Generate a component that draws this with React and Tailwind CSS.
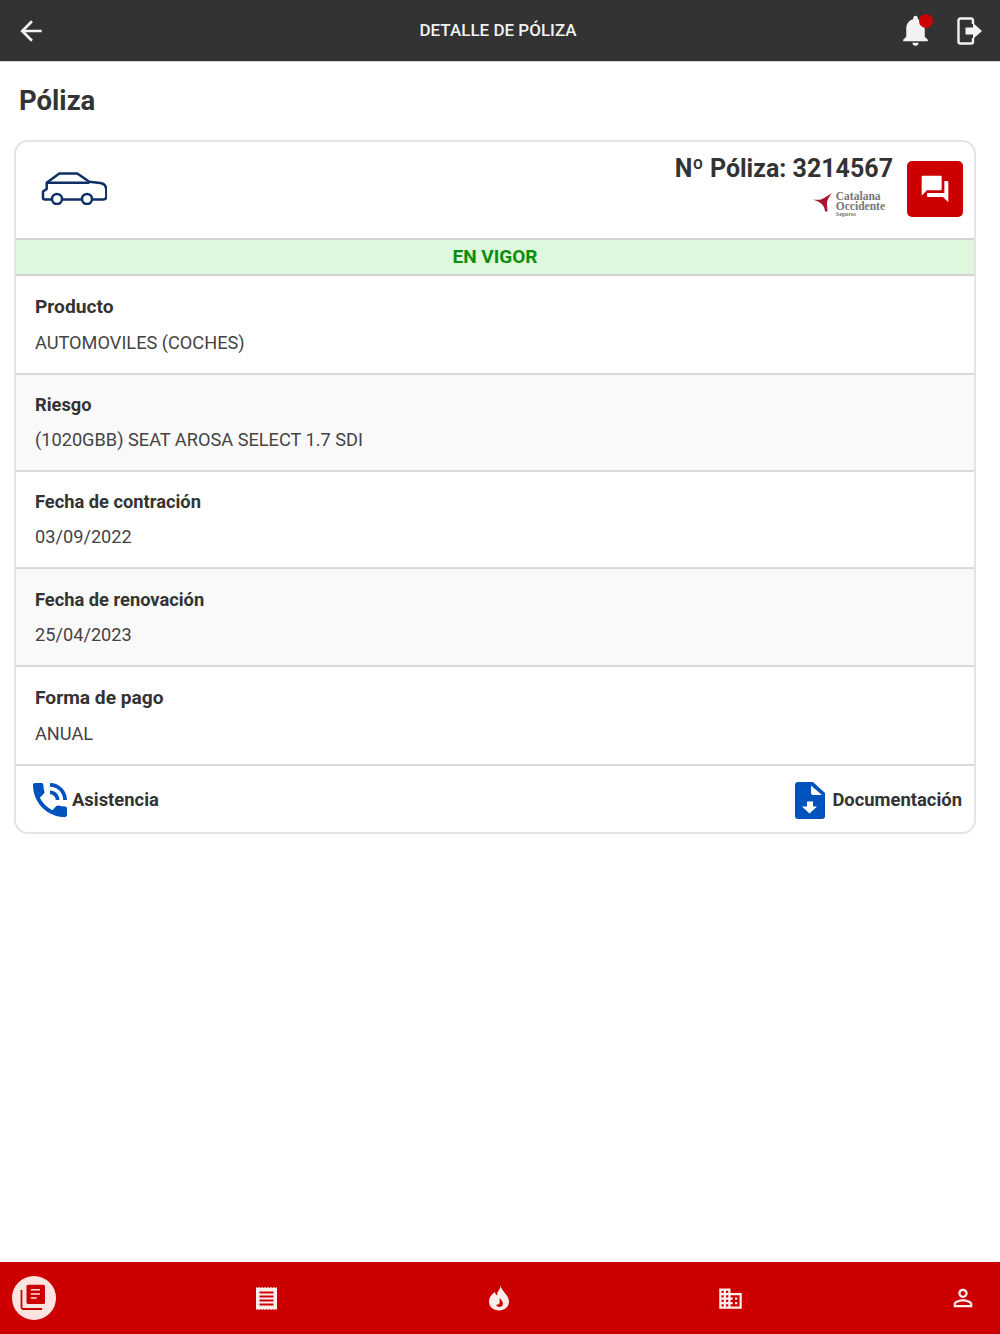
import React from 'react';

const rows = [
  { label: 'Producto', value: 'AUTOMOVILES (COCHES)', box: 'h-[99px] bg-white pt-[18px]', title: 'text-[19.200px]', gap: 'mt-[10px]' },
  { label: 'Riesgo', value: '(1020GBB) SEAT AROSA SELECT 1.7 SDI', box: 'h-[97px] bg-[#f9f9f9] pt-[17px]', title: 'text-[18.300px]', gap: 'mt-[9px]' },
  { label: 'Fecha de contración', value: '03/09/2022', box: 'h-[97px] bg-white pt-[17px]', title: 'text-[18.300px]', gap: 'mt-[9px]' },
  { label: 'Fecha de renovación', value: '25/04/2023', box: 'h-[98px] bg-[#f9f9f9] pt-[18px]', title: 'text-[18.300px]', gap: 'mt-[9px]' },
  { label: 'Forma de pago', value: 'ANUAL', box: 'h-[99px] bg-white pt-[18px]', title: 'text-[19.200px]', gap: 'mt-[10px]' },
];

function Icon({ d, className, viewBox = '0 0 24 24' }) {
  return (
    <svg viewBox={viewBox} fill="currentColor" className={className}>
      <path d={d} />
    </svg>
  );
}

function CarIcon() {
  return (
    <svg viewBox="0 0 66 33" fill="none" stroke="#0f2f66" strokeWidth="2.500" strokeLinejoin="round" className="w-[66px] h-[33px] -mt-[3px]">
      <path d="M11 27.500H4q-2 0-2-2v-6l3.700-2.500V10.700L18.300 1.500h18l12 8.200 11 1.300q6 1 6 7v6.700q0 2.800-3 2.800H51M41 27.500H21" />
      <path d="M5.700 10.700H48.300" />
      <circle cx="16" cy="27" r="5" />
      <circle cx="46" cy="27" r="5" />
    </svg>
  );
}

function CatalanaLogo() {
  return (
    <div className="flex items-center gap-[3px] text-[#777777]">
      <svg viewBox="0 0 20 20" className="w-[20px] h-[20px] -mt-[3px]">
        <path d="M0 6.500 C5 7 8 7 11 5 L19 0 C15 5 14 8 14 11 L14.500 18.500 L12 18.500 C11.500 13 9 9.500 0 6.500z" fill="#a8162f" />
      </svg>
      <div className="flex flex-col font-['Liberation_Serif',serif]">
        <span className="text-[11.500px] leading-[10px] font-bold">Catalana</span>
        <span className="text-[11.500px] leading-[10px] font-bold">Occidente</span>
        <span className="text-[6px] leading-[7px] font-bold">Seguros</span>
      </div>
    </div>
  );
}

export default function App() {
  return (
    <div className="min-h-screen flex flex-col bg-white font-['Roboto',sans-serif] text-[#333333]">
      {/* Header */}
      <header className="h-[62px] bg-[#333333] flex items-center pl-[15px] pr-[18px] border-b border-[#d8d8d8] text-[#f2f2f2]">
        <Icon d="M20 11H7.830l5.590-5.590L12 4l-8 8 8 8 1.410-1.410L7.830 13H20v-2z" className="w-[32px] h-[32px]" />
        <h1 className="flex-1 text-center text-[17px] font-medium pl-[52px]">DETALLE DE PÓLIZA</h1>
        <div className="flex items-center gap-[23px]">
          <div className="relative">
            <Icon
              d="M12 22c1.100 0 2-.900 2-2h-4c0 1.100.890 2 2 2zm6-6v-5c0-3.070-1.640-5.640-4.500-6.320V4c0-.830-.670-1.500-1.500-1.500s-1.500.670-1.500 1.500v.680C7.630 5.360 6 7.920 6 11v5l-2 2v1h16v-1l-2-2z"
              className="w-[37px] h-[37px]"
            />
            <span className="absolute top-[2px] right-[1px] w-[14px] h-[14px] rounded-full bg-[#cc0000]" />
          </div>
          <svg viewBox="0 0 25 28" fill="none" className="w-[25px] h-[28px]">
            <path d="M16 7V3.500q0-2-2-2H3.500q-2 0-2 2v21q0 2 2 2H14q2 0 2-2V21" stroke="currentColor" strokeWidth="2.400" />
            <path d="M8.500 10.500H16V6l9 8-9 8v-4.500H8.500z" fill="currentColor" />
          </svg>
        </div>
      </header>

      <main className="flex-1 pl-[14px] pr-[24px]">
        <h2 className="pl-[5px] pt-[21px] pb-[21px] text-[27.500px] leading-[36px] font-bold">Póliza</h2>

        <section className="rounded-[14px] border-2 border-[#e4e4e4] overflow-hidden">
          {/* Summary */}
          <div className="h-[96px] flex items-center pl-[25px] pr-[11px]">
            <CarIcon />
            <div className="ml-auto mr-[14px] flex flex-col items-end -mt-[9px]">
              <p className="text-[25px] leading-[30px] font-bold">Nº Póliza: 3214567</p>
              <div className="mt-[7px] mr-[8px]">
                <CatalanaLogo />
              </div>
            </div>
            <button className="w-[56px] h-[56px] -mt-[3px] rounded-[5px] bg-[#cc0000] flex items-center justify-center text-white">
              <Icon
                d="M21 6h-2v9H6v2c0 .550.450 1 1 1h11l4 4V7c0-.550-.450-1-1-1zm-4 6V3c0-.550-.450-1-1-1H3c-.550 0-1 .450-1 1v14l4-4h10c.550 0 1-.450 1-1z"
                className="w-[32px] h-[32px]"
              />
            </button>
          </div>

          {/* Status */}
          <div className="h-[38px] flex items-center justify-center bg-[#dff7dd] border-y-2 border-[#d0d5ce] text-[#0a8f0a] text-[19px] font-bold">
            EN VIGOR
          </div>

          {/* Rows */}
          {rows.map((row) => (
            <div key={row.label} className={`${row.box} border-b-2 border-[#d9d9d9] pl-[19px]`}>
              <p className={`${row.title} leading-[26px] font-bold`}>{row.label}</p>
              <p className={`${row.gap} text-[18.200px] leading-[26px] text-[#444444]`}>{row.value}</p>
            </div>
          ))}

          {/* Footer */}
          <div className="h-[66px] flex items-center justify-between pl-[17px] pr-[12px] pt-[2px]">
            <div className="flex items-center gap-[5px]">
              <Icon
                viewBox="3 3 18 18"
                d="M20 15.500c-1.250 0-2.450-.200-3.570-.570-.350-.110-.740-.030-1.020.240l-2.200 2.200c-2.830-1.440-5.150-3.750-6.590-6.590l2.200-2.210c.280-.260.360-.650.250-1C8.700 6.450 8.500 5.250 8.500 4c0-.550-.450-1-1-1H4c-.550 0-1 .450-1 1 0 9.390 7.610 17 17 17 .550 0 1-.450 1-1v-3.500c0-.550-.450-1-1-1zM19 12h2c0-4.970-4.030-9-9-9v2c3.870 0 7 3.130 7 7zm-4 0h2c0-2.760-2.240-5-5-5v2c1.660 0 3 1.340 3 3z"
                className="w-[34px] h-[34px] text-[#0053bd]"
              />
              <span className="text-[18.400px] font-bold">Asistencia</span>
            </div>
            <div className="flex items-center gap-[7px]">
              <svg viewBox="0 0 30 37" className="w-[30px] h-[37px]">
                <path d="M3 0h15l12 11v23q0 3-3 3H3q-3 0-3-3V3q0-3 3-3z" fill="#0053bd" />
                <path d="M16 3.500l11 9.500h-9q-2 0-2-2z" fill="#fff" />
                <path d="M12 19.500h6v5h4l-7.500 7-7.500-7h5z" fill="#fff" />
              </svg>
              <span className="text-[18.400px] font-bold">Documentación</span>
            </div>
          </div>
        </section>
      </main>

      {/* Bottom nav */}
      <nav className="h-[72px] bg-[#cc0000] flex items-center justify-between pl-[12px] pr-[15px] text-[#fdeeee]">
        <div className="w-[44px] h-[44px] rounded-full bg-[#fde4e1] flex items-center justify-center">
          <svg viewBox="0 0 30 30" fill="none" className="w-[30px] h-[30px]">
            <path d="M2.500 7v17q0 2 2 2H23" stroke="#cc0000" strokeWidth="1.800" />
            <rect x="7.500" y="1.700" width="18.500" height="19.300" rx="1.500" fill="#cc0000" />
            <path d="M11.700 6.700H21M11.700 11H21M11.700 15H17.700" stroke="#fde4e1" strokeWidth="1.500" />
          </svg>
        </div>
        <div className="w-[44px] flex justify-center">
          <svg viewBox="0 0 21 23" className="w-[21px] h-[23px]">
            <path d="M0 0l1.500 1L3 0l1.500 1L6 0l1.500 1L9 0l1.500 1L12 0l1.500 1L15 0l1.500 1L18 0l1.500 1L21 0v23l-1.500-1-1.500 1-1.500-1-1.500 1-1.500-1-1.500 1-1.500-1-1.500 1-1.500-1-1.500 1-1.500-1-1.500 1-1.500-1L0 23z" fill="currentColor" />
            <path d="M3.500 5.500h14M3.500 9.500h14M3.500 13.500h14M3.500 17.500h14" stroke="#cc0000" strokeWidth="2" />
          </svg>
        </div>
        <div className="w-[44px] flex justify-center">
          <svg viewBox="0 0 20 26" className="w-[20px] h-[26px]">
            <path d="M11 0c1 3-1.500 5.500-2.500 7.500-.5 1-.5 2 0 3-1.500-.5-2.500-2-2.500-3.500C3 9 0 12.500 0 16.500 0 22 4.500 25.500 10 25.500S20 22 20 16.500C20 10 13 7 11 0z" fill="currentColor" />
            <path d="M11 13c.5 2 3 3 3 5.500 0 2-1.500 3.500-3.500 3.500-1.800 0-3-1-3.500-2.500 1.500.5 3 0 3.500-1.500.5-1.500-.5-3.500.5-5z" fill="#cc0000" />
          </svg>
        </div>
        <div className="w-[44px] flex justify-center">
          <Icon
            d="M12 7V3H2v18h20V7H12zM6 19H4v-2h2v2zm0-4H4v-2h2v2zm0-4H4V9h2v2zm0-4H4V5h2v2zm4 12H8v-2h2v2zm0-4H8v-2h2v2zm0-4H8V9h2v2zm0-4H8V5h2v2zm10 12h-8v-2h2v-2h-2v-2h2v-2h-2V9h8v10zm-2-8h-2v2h2v-2zm0 4h-2v2h2v-2z"
            className="w-[27px] h-[27px]"
          />
        </div>
        <div className="w-[44px] flex justify-center">
          <Icon
            d="M12 5.900c1.160 0 2.100.940 2.100 2.100s-.940 2.100-2.100 2.100S9.900 9.160 9.900 8s.940-2.100 2.100-2.100m0 9c2.970 0 6.100 1.460 6.100 2.100v1.100H5.900V17c0-.640 3.130-2.100 6.100-2.100M12 4C9.790 4 8 5.790 8 8s1.790 4 4 4 4-1.790 4-4-1.790-4-4-4zm0 9c-2.670 0-8 1.340-8 4v3h16v-3c0-2.660-5.330-4-8-4z"
            className="w-[28px] h-[28px]"
          />
        </div>
      </nav>
    </div>
  );
}
